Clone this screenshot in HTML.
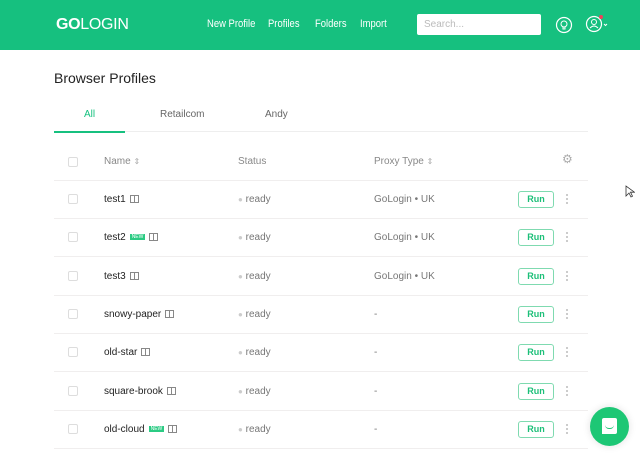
<!DOCTYPE html><html><head><style>
*{margin:0;padding:0;box-sizing:border-box}
body{width:640px;height:457px;overflow:hidden;background:#fff;font-family:"Liberation Sans",sans-serif;position:relative}
.hd{position:absolute;left:0;top:0;width:640px;height:50px;background:#16c07f}
.logo{position:absolute;left:56px;top:16px;color:#fff;font-size:16px;letter-spacing:-.3px}
.logo b{font-weight:900}
.nav{position:absolute;top:18px;color:#fff;font-size:11px;transform:scaleX(.86);transform-origin:0 0}
.srch{position:absolute;left:417px;top:14px;width:124px;height:21px;background:#fff;border-radius:2px;font-size:10px;color:#bbb;padding:5px 7px}
.ttl{position:absolute;left:54px;top:70px;font-size:14px;color:#222}
.tab{position:absolute;top:109px;font-size:10px;color:#666}
.ab{position:absolute;top:131px;left:54px;width:534px;height:1px;background:#eee}
.ul{position:absolute;top:131px;left:54px;width:71px;height:2px;background:#16c07f}
.cb{position:absolute;left:68px;width:10px;height:10px;border:1px solid #ddd;border-radius:2px}
.t{position:absolute;font-size:10px;line-height:12px}
.ln{position:absolute;left:54px;width:534px;height:1px;background:#f0eeee}
.run{position:absolute;left:518px;width:36px;height:17px;border:1px solid #7fdab0;border-radius:3px;color:#1cbf78;font-size:9px;font-weight:bold;text-align:center;line-height:15px}
.dots{position:absolute;left:566px;width:2px;height:10px;border-left:2px dotted #ccc}
.new{display:inline-block;background:#2bcb83;color:#fff;font-size:5px;line-height:6px;height:6px;padding:0 2px;vertical-align:middle;margin-left:4px}
.ic{display:inline-block;width:9px;height:8px;border:1px solid #888;vertical-align:middle;margin-left:4px;background:linear-gradient(#888,#888) 3px 0/1px 8px no-repeat}
</style></head><body>
<div class="hd">
<div class="logo"><b>GO</b>LOGIN</div>
<div class="nav" style="left:207px">New Profile</div>
<div class="nav" style="left:268px">Profiles</div>
<div class="nav" style="left:315px">Folders</div>
<div class="nav" style="left:360px">Import</div>
<div class="srch">Search...</div>
<svg style="position:absolute;left:555px;top:16px" width="18" height="18"><circle cx="9" cy="9" r="7.5" fill="none" stroke="#fff" stroke-width="1.2"/><circle cx="9" cy="8" r="3" fill="none" stroke="#fff"/><path d="M8 11v2h2v-2" stroke="#fff" fill="none"/></svg>
<svg style="position:absolute;left:585px;top:13px" width="28" height="22"><circle cx="9" cy="11" r="7.5" fill="none" stroke="#fff" stroke-width="1.2"/><circle cx="9" cy="9" r="2.5" fill="none" stroke="#fff"/><path d="M5 15q4-4 8 0" stroke="#fff" fill="none"/><circle cx="16" cy="4" r="2" fill="#f0405a"/><path d="M19 11l1.5 1.5 1.5-1.5" stroke="#fff" fill="none"/></svg>
</div>
<div class="ttl">Browser Profiles</div>
<div class="tab" style="left:84px;color:#16c07f">All</div>
<div class="tab" style="left:160px">Retailcom</div>
<div class="tab" style="left:265px">Andy</div>
<div class="ab"></div><div class="ul"></div>
<div class="cb" style="top:157px"></div>
<div class="t" style="left:104px;top:156px;color:#888">Name <span style="font-size:8px;color:#aaa">⇕</span></div>
<div class="t" style="left:238px;top:156px;color:#888">Status</div>
<div class="t" style="left:374px;top:156px;color:#888">Proxy Type <span style="font-size:8px;color:#aaa">⇕</span></div>
<div class="t" style="left:562px;top:153px;color:#aaa;font-size:12px">⚙</div>
<div class="ln" style="top:180px"></div>
<div id="rows"></div>
<div style="position:absolute;left:590px;top:407px;width:39px;height:39px;border-radius:50%;background:#1dc775;box-shadow:0 0 8px rgba(0,0,0,.12)"><div style="position:absolute;left:12px;top:11px;width:15px;height:16px;background:#fff;border-radius:2px 2px 2px 0"></div><div style="position:absolute;left:15px;top:18px;width:9px;height:4px;border-bottom:1.5px solid #1dc775;border-radius:0 0 5px 5px"></div></div>
<svg style="position:absolute;left:625px;top:185px" width="10" height="14"><path d="M1 1v10l3-3 2 4 1.5-.8-2-4h4z" fill="#fff" stroke="#333" stroke-width=".8"/></svg>
<script>
var d=[["test1",0,"GoLogin • UK"],["test2",1,"GoLogin • UK"],["test3",0,"GoLogin • UK"],["snowy-paper",0,"-"],["old-star",0,"-"],["square-brook",0,"-"],["old-cloud",1,"-"]];
var h="";d.forEach(function(r,i){var y=Math.round(199+i*38.3);
h+='<div class="cb" style="top:'+(y-5)+'px"></div><div class="t" style="left:104px;top:'+(y-5)+'px;color:#222">'+r[0]+(r[1]?'<span class="new">NEW</span>':'')+'<span class="ic"></span></div>'+
'<div class="t" style="left:238px;top:'+(y-5)+'px;color:#777"><span style="color:#ccc;font-size:8px">●</span> ready</div>'+
'<div class="t" style="left:374px;top:'+(y-5)+'px;color:#777">'+r[2]+'</div>'+
'<div class="run" style="top:'+(y-8)+'px">Run</div><div class="dots" style="top:'+(y-5)+'px"></div>'+
'<div class="ln" style="top:'+(y+19)+'px"></div>';});
document.getElementById("rows").innerHTML=h;
</script>
</body></html>
